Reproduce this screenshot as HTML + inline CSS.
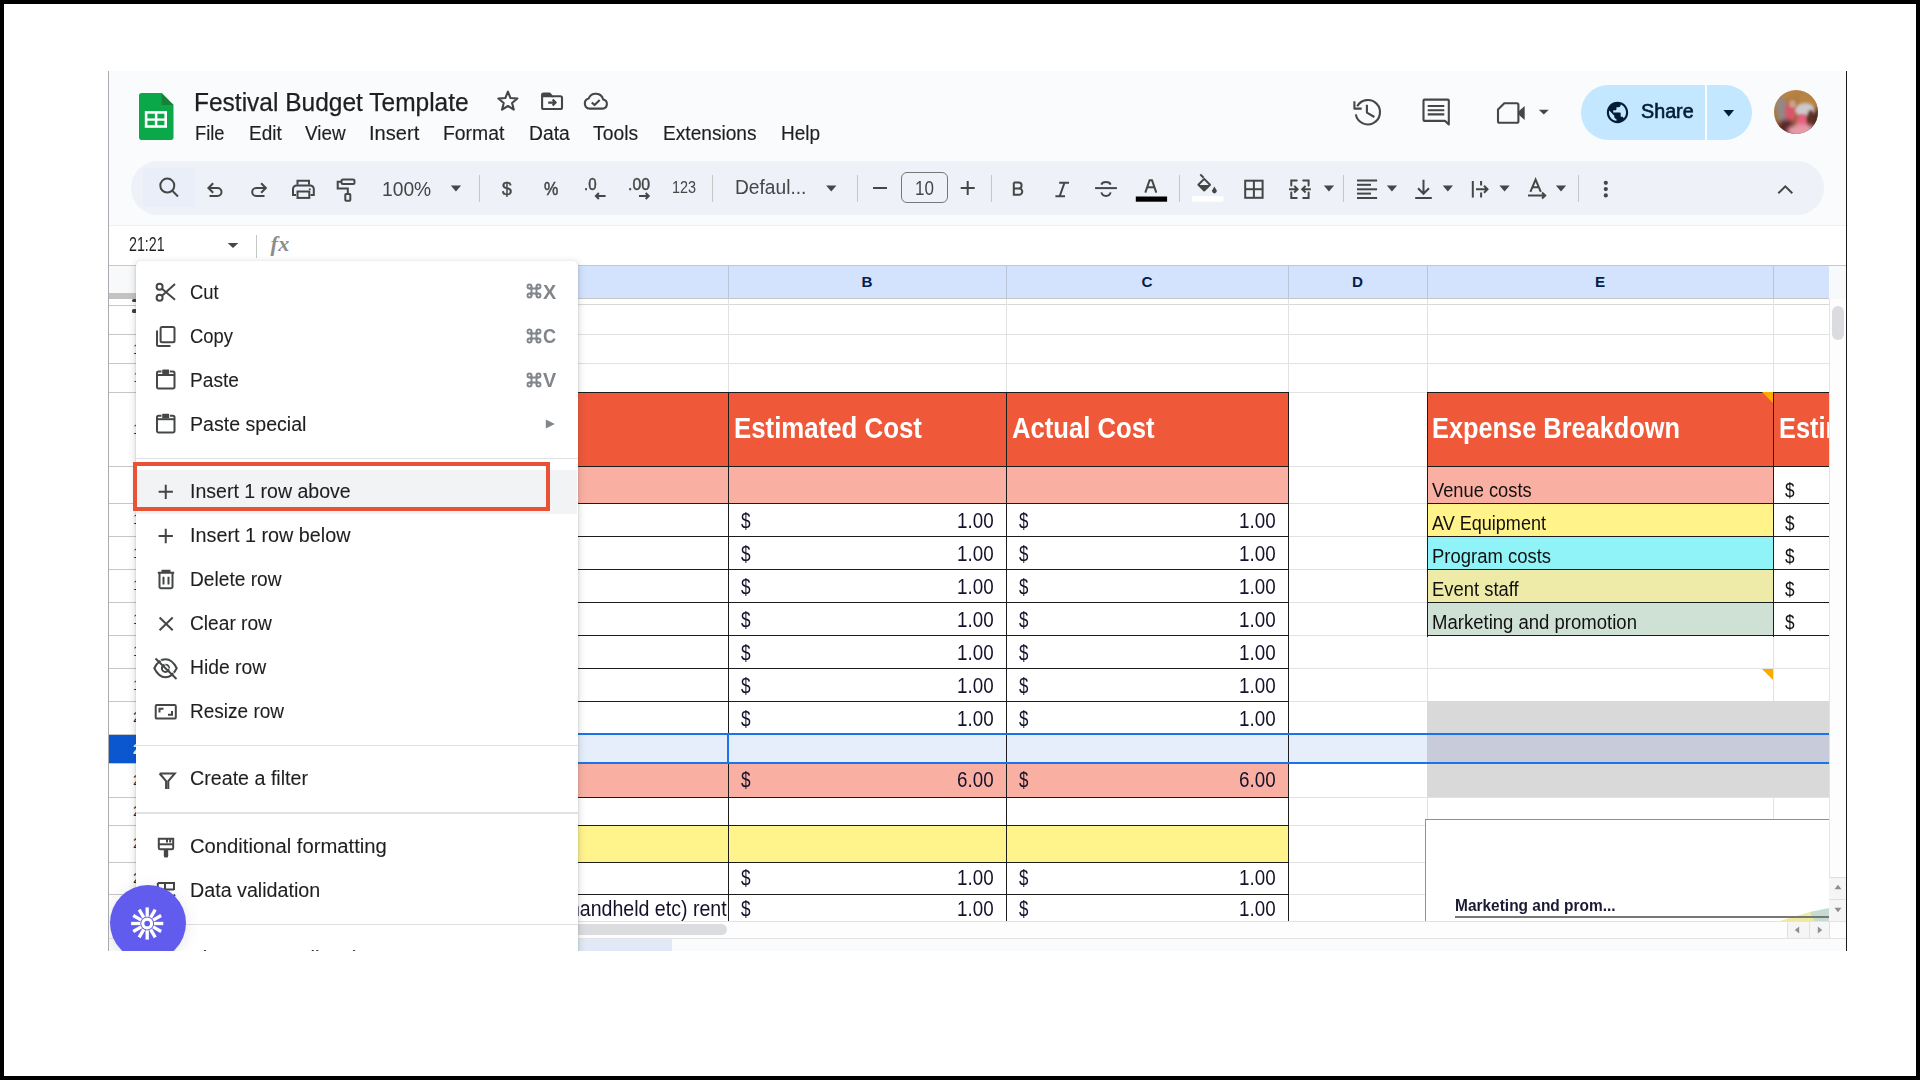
<!DOCTYPE html><html><head><meta charset="utf-8"><style>html,body{margin:0;padding:0;}body{width:1920px;height:1080px;position:relative;overflow:hidden;background:#fff;font-family:"Liberation Sans", sans-serif;}</style></head><body>
<div style="position:absolute;left:0;top:0;width:1920px;height:1080px;clip-path:inset(71px 73px 129px 108px);">
<div style="position:absolute;left:108px;top:71px;width:1739px;height:880px;background:#fff"></div>
<div style="position:absolute;left:108px;top:71px;width:1739px;height:155px;background:#f9fbfd"></div>
<svg style="position:absolute;left:139px;top:93px;" width="35" height="47" viewBox="0 0 35 47"><path d="M2.6 0h20l11.9 11.9v32.4a2.6 2.6 0 0 1-2.6 2.6H2.6A2.6 2.6 0 0 1 0 44.3V2.6A2.6 2.6 0 0 1 2.6 0z" fill="#0ba84a"/><path d="M22.6 0l11.9 11.9H22.6z" fill="#188038"/><rect x="7.1" y="19.4" width="19.6" height="14.1" fill="none" stroke="#fff" stroke-width="2.6"/><line x1="7.1" y1="26.6" x2="26.7" y2="26.6" stroke="#fff" stroke-width="2.3"/><line x1="17.1" y1="19.4" x2="17.1" y2="33.5" stroke="#fff" stroke-width="2.5"/></svg>
<div style="position:absolute;left:193.90px;top:90px;font-size:25.2px;line-height:1;font-weight:400;color:#1f1f1f;white-space:nowrap;transform:scaleX(0.9728);transform-origin:0 0;-webkit-text-stroke:0.25px #1f1f1f;">Festival Budget Template</div>
<div style="position:absolute;left:195.30px;top:124px;font-size:19.4px;line-height:1;font-weight:400;color:#1f1f1f;white-space:nowrap;transform:scaleX(0.9429);transform-origin:0 0;-webkit-text-stroke:0.15px #1f1f1f;">File</div>
<div style="position:absolute;left:248.70px;top:124px;font-size:19.4px;line-height:1;font-weight:400;color:#1f1f1f;white-space:nowrap;transform:scaleX(0.9778);transform-origin:0 0;-webkit-text-stroke:0.15px #1f1f1f;">Edit</div>
<div style="position:absolute;left:305.00px;top:124px;font-size:19.4px;line-height:1;font-weight:400;color:#1f1f1f;white-space:nowrap;transform:scaleX(0.9714);transform-origin:0 0;-webkit-text-stroke:0.15px #1f1f1f;">View</div>
<div style="position:absolute;left:369.20px;top:124px;font-size:19.4px;line-height:1;font-weight:400;color:#1f1f1f;white-space:nowrap;transform:scaleX(1.0359);transform-origin:0 0;-webkit-text-stroke:0.15px #1f1f1f;">Insert</div>
<div style="position:absolute;left:443.30px;top:124px;font-size:19.4px;line-height:1;font-weight:400;color:#1f1f1f;white-space:nowrap;transform:scaleX(0.9992);transform-origin:0 0;-webkit-text-stroke:0.15px #1f1f1f;">Format</div>
<div style="position:absolute;left:528.70px;top:124px;font-size:19.4px;line-height:1;font-weight:400;color:#1f1f1f;white-space:nowrap;transform:scaleX(0.9939);transform-origin:0 0;-webkit-text-stroke:0.15px #1f1f1f;">Data</div>
<div style="position:absolute;left:593.00px;top:124px;font-size:19.4px;line-height:1;font-weight:400;color:#1f1f1f;white-space:nowrap;transform:scaleX(0.9956);transform-origin:0 0;-webkit-text-stroke:0.15px #1f1f1f;">Tools</div>
<div style="position:absolute;left:662.50px;top:124px;font-size:19.4px;line-height:1;font-weight:400;color:#1f1f1f;white-space:nowrap;transform:scaleX(0.9864);transform-origin:0 0;-webkit-text-stroke:0.15px #1f1f1f;">Extensions</div>
<div style="position:absolute;left:780.80px;top:124px;font-size:19.4px;line-height:1;font-weight:400;color:#1f1f1f;white-space:nowrap;transform:scaleX(0.9800);transform-origin:0 0;-webkit-text-stroke:0.15px #1f1f1f;">Help</div>
<svg style="position:absolute;left:0;top:0" width="1920" height="160" viewBox="0 0 1920 160"><polygon points="507.90,91.60 510.49,98.04 517.41,98.51 512.08,102.96 513.78,109.69 507.90,106.00 502.02,109.69 503.72,102.96 498.39,98.51 505.31,98.04" fill="none" stroke="#444746" stroke-width="2.1" stroke-linejoin="round" stroke-width="2"/><path d="M542.1 95 A1.5 1.5 0 0 1 543.6 93.6 H549.5 L552 96.2 H560.4 A1.6 1.6 0 0 1 562 97.8 V107.4 A1.6 1.6 0 0 1 560.4 109 H543.7 A1.6 1.6 0 0 1 542.1 107.4 Z" fill="none" stroke="#444746" stroke-width="2.1" stroke-linejoin="round"/><path d="M542.1 94.5 H549.5 L551.6 96.6 H542.1Z" fill="#444746" stroke="#444746" stroke-width="1.5"/><path d="M548.2 102.6 H555.5 M552.6 99.6 L555.7 102.6 L552.6 105.6" fill="none" stroke="#444746" stroke-width="2.1" stroke-linejoin="round" stroke-width="1.9"/><path d="M589.5 108.6 H602.5 A4.6 4.6 0 0 0 603.2 99.5 A7.7 7.7 0 0 0 588.7 98.4 A5.2 5.2 0 0 0 589.5 108.6 Z" fill="none" stroke="#444746" stroke-width="2.1" stroke-linejoin="round"/><path d="M591.8 102.4 L594.6 105.1 L599.7 99.9" fill="none" stroke="#444746" stroke-width="2.1" stroke-linejoin="round" stroke-width="1.9"/><path d="M1357.2 106.2 A12.2 12.2 0 1 1 1355.8 114.4" fill="none" stroke="#444746" stroke-width="2.1" stroke-linejoin="round" stroke-width="2.3"/><path d="M1354.4 101.3 V108.6 H1361.7" fill="none" stroke="#444746" stroke-width="2.1" stroke-linejoin="round" stroke-width="2.2" stroke-linejoin="miter"/><path d="M1366.9 104.8 V112.6 L1374.4 117" fill="none" stroke="#444746" stroke-width="2.1" stroke-linejoin="round" stroke-width="2.3"/><path d="M1424.5 99.6 H1447.8 A1 1 0 0 1 1448.8 100.6 V124.5 L1445.2 120.9 H1424.5 A1 1 0 0 1 1423.5 119.9 V100.6 A1 1 0 0 1 1424.5 99.6 Z" fill="none" stroke="#444746" stroke-width="2.1" stroke-linejoin="round" stroke-width="2.3"/><path d="M1427.7 106 H1444.3 M1427.7 110.3 H1444.3 M1427.7 114.4 H1444.3" fill="none" stroke="#444746" stroke-width="2.1" stroke-linejoin="round" stroke-width="2.2"/><path d="M1504.3 103.2 H1516.8 A1.6 1.6 0 0 1 1518.4 104.8 V121.2 A1.6 1.6 0 0 1 1516.8 122.8 H1499.6 A1.6 1.6 0 0 1 1498 121.2 V109.4 Z" fill="none" stroke="#444746" stroke-width="2.1" stroke-linejoin="round" stroke-width="2.3"/><path d="M1518.4 111.5 L1524.7 106 V120 L1518.4 114.5Z" fill="#444746"/><path d="M1538.8 109.7 H1548.8 L1543.8 114.6Z" fill="#444746"/></svg>
<div style="position:absolute;left:1581px;top:85px;width:171px;height:55px;background:#c2e7ff;border-radius:27.5px"></div>
<div style="position:absolute;left:1705px;top:85px;width:1.6px;height:55px;background:#f9fbfd"></div>
<svg style="position:absolute;left:1606px;top:101px;" width="23" height="23" viewBox="1.2 1.2 21.6 21.6"><path fill="#001d35" d="M12 2C6.48 2 2 6.48 2 12s4.48 10 10 10 10-4.48 10-10S17.52 2 12 2zm-1 17.93c-3.95-.49-7-3.85-7-7.93 0-.62.08-1.21.21-1.79L9 15v1c0 1.1.9 2 2 2v1.93zm6.9-2.54c-.26-.81-1-1.39-1.9-1.39h-1v-3c0-.55-.45-1-1-1H8v-2h2c.55 0 1-.45 1-1V7h2c1.1 0 2-.9 2-2v-.41c2.93 1.19 5 4.06 5 7.41 0 2.08-.8 3.97-2.1 5.39z"/></svg>
<div style="position:absolute;left:1640.70px;top:101px;font-size:20px;line-height:1;font-weight:400;color:#001d35;white-space:nowrap;transform:scaleX(0.9869);transform-origin:0 0;-webkit-text-stroke:0.6px #001d35;">Share</div>
<svg style="position:absolute;left:1722px;top:109px;" width="14" height="9" viewBox="0 0 14 9"><path d="M1.4 1 H12.1 L6.75 7.6Z" fill="#001d35"/></svg>
<div style="position:absolute;left:1774px;top:90px;width:44px;height:44px;border-radius:50%;overflow:hidden;background:linear-gradient(160deg,#c08a48 0%,#a8743c 45%,#6a4028 100%);"><div style="position:absolute;left:24px;top:0px;width:22px;height:20px;border-radius:50%;background:#b88444;filter:blur(2px);transform:rotate(0deg)"></div><div style="position:absolute;left:34px;top:18px;width:12px;height:26px;border-radius:50%;background:#4e2a1e;filter:blur(2px);transform:rotate(0deg)"></div><div style="position:absolute;left:3px;top:6px;width:12px;height:34px;border-radius:50%;background:#948884;filter:blur(1.5px);transform:rotate(-10deg)"></div><div style="position:absolute;left:11px;top:12px;width:11px;height:20px;border-radius:50%;background:#d8566a;filter:blur(1.5px);transform:rotate(0deg)"></div><div style="position:absolute;left:15px;top:10px;width:7px;height:8px;border-radius:50%;background:#c8a088;filter:blur(1.2px);transform:rotate(0deg)"></div><div style="position:absolute;left:4px;top:30px;width:16px;height:16px;border-radius:50%;background:#5a2428;filter:blur(2px);transform:rotate(0deg)"></div><div style="position:absolute;left:21px;top:13px;width:20px;height:14px;border-radius:50%;background:#cdc8cc;filter:blur(1.5px);transform:rotate(0deg)"></div><div style="position:absolute;left:22px;top:24px;width:13px;height:18px;border-radius:50%;background:#e4607c;filter:blur(1.5px);transform:rotate(0deg)"></div><div style="position:absolute;left:33px;top:20px;width:8px;height:22px;border-radius:50%;background:#5c3024;filter:blur(1.5px);transform:rotate(0deg)"></div><div style="position:absolute;left:13px;top:34px;width:30px;height:14px;border-radius:50%;background:#e49aa8;filter:blur(2px);transform:rotate(0deg)"></div></div>
<div style="position:absolute;left:131px;top:161px;width:1693px;height:54px;background:#eef2f8;border-radius:27px"></div>
<div style="position:absolute;left:143px;top:168px;width:52px;height:39px;background:#e9eef8;border-radius:2px"></div>
<svg style="position:absolute;left:0;top:0" width="1920" height="260" viewBox="0 0 1920 260"><circle cx="167.3" cy="185.6" r="7" fill="none" stroke="#444746" stroke-width="2"/><line x1="172.5" y1="191" x2="178" y2="196.5" fill="none" stroke="#444746" stroke-width="2" stroke-width="2.2"/><path d="M209.5 196 H217.5 A4 4 0 0 0 217.5 188 H208.5 M213.2 183.2 L208.4 188 L213.2 192.8" fill="none" stroke="#444746" stroke-width="2"/><path d="M264.5 196 H256.2 A4 4 0 0 1 256.2 188 H265.8 M261.1 183.2 L265.9 188 L261.1 192.8" fill="none" stroke="#444746" stroke-width="2"/><path d="M297.5 184.8 V180.8 H309 V184.8" fill="none" stroke="#444746" stroke-width="2"/><path d="M296 195 H293 V189 A3.6 3.6 0 0 1 296.6 185.4 H310.2 A3.6 3.6 0 0 1 313.8 189 V195 H310.5" fill="none" stroke="#444746" stroke-width="2"/><rect x="297.5" y="191.5" width="11.8" height="6.4" fill="none" stroke="#444746" stroke-width="2"/><circle cx="309.8" cy="189.2" r="1" fill="#444746"/><rect x="341.5" y="179.5" width="13" height="4.6" rx="1.5" fill="none" stroke="#444746" stroke-width="2"/><path d="M341.5 181.8 H337.7 V188.5 H347.8 V194" fill="none" stroke="#444746" stroke-width="2"/><rect x="345.3" y="194" width="5" height="6.8" rx="0.8" fill="none" stroke="#444746" stroke-width="2"/><path d="M605.6 196 H595.8 M598.9 193 L595.9 196 L598.9 199" fill="none" stroke="#444746" stroke-width="2" stroke-width="1.7"/><path d="M639 196 H648.8 M645.7 193 L648.7 196 L645.7 199" fill="none" stroke="#444746" stroke-width="2" stroke-width="1.7"/><line x1="873" y1="188" x2="887" y2="188" fill="none" stroke="#444746" stroke-width="2" stroke-width="2.2"/><line x1="960.7" y1="188" x2="974.7" y2="188" fill="none" stroke="#444746" stroke-width="2" stroke-width="2.2"/><line x1="967.7" y1="181" x2="967.7" y2="195" fill="none" stroke="#444746" stroke-width="2" stroke-width="2.2"/><line x1="1095.1" y1="188.1" x2="1116.9" y2="188.1" fill="none" stroke="#444746" stroke-width="2" stroke-width="2.2"/><path d="M1101.4 184.6 A4.7 3.2 0 0 1 1110.6 184.6" fill="none" stroke="#444746" stroke-width="2" stroke-width="2.1"/><path d="M1101.4 192.4 A4.7 4.4 0 0 0 1110.6 192.4" fill="none" stroke="#444746" stroke-width="2" stroke-width="2.1"/><path d="M1013.8 182.4 H1018.6 A3 3 0 0 1 1018.6 188.4 H1013.8 M1013.8 188.4 H1019.1 A3.2 3.2 0 0 1 1019.1 194.8 H1013.8 Z M1013.8 182.4 V194.8" fill="none" stroke="#444746" stroke-width="2" stroke-width="3" stroke-linejoin="miter"/><path d="M1059.2 182.7 H1069 M1055.4 196.2 H1065 M1064.4 183 L1059.8 195.8" fill="none" stroke="#444746" stroke-width="2" stroke-width="2.6"/><rect x="1135.8" y="196.5" width="31.3" height="5.2" fill="#000"/><path d="M1145.3 192.7 L1149.6 180.2 H1152 L1156.3 192.7" fill="none" stroke="#444746" stroke-width="2" stroke-width="2.2" stroke-linejoin="miter"/><path d="M1147.2 187.3 H1154.4" fill="none" stroke="#444746" stroke-width="2" stroke-width="2"/><rect x="1192" y="196.2" width="31.3" height="5.5" fill="#ffffff"/><path d="M1200.3 174.4 L1203.6 177.8" fill="none" stroke="#444746" stroke-width="2" stroke-width="2"/><path d="M1204.2 178.9 L1210 184.7 L1204.2 190.5 L1198.4 184.7 Z" fill="none" stroke="#444746" stroke-width="2" stroke-width="2" stroke-linejoin="round"/><path d="M1198.4 184.9 H1210 L1204.2 190.7 Z" fill="#444746"/><path d="M1214.4 186.4 L1212.2 190.2 A2.35 2.35 0 1 0 1216.6 190.2 Z" fill="#444746"/><rect x="1245.2" y="180.7" width="17.4" height="17.1" fill="none" stroke="#444746" stroke-width="2"/><line x1="1253.9" y1="180.7" x2="1253.9" y2="197.8" fill="none" stroke="#444746" stroke-width="2"/><line x1="1245.2" y1="189.2" x2="1262.6" y2="189.2" fill="none" stroke="#444746" stroke-width="2"/><path d="M1296.7 180.6 H1291.3 V185.6 M1291.3 192.6 V198 H1296.7 M1303.2 180.6 H1308.6 V185.6 M1308.6 192.6 V198 H1303.2" fill="none" stroke="#444746" stroke-width="2" stroke-width="2.1" stroke-linecap="round"/><path d="M1289 189.2 H1297 M1294.2 185.9 L1297.6 189.2 L1294.2 192.5 M1310.8 189.2 H1302.6 M1305.6 185.9 L1302.2 189.2 L1305.6 192.5" fill="none" stroke="#444746" stroke-width="2" stroke-width="2.1"/><line x1="1357" y1="180.5" x2="1377.1" y2="180.5" fill="none" stroke="#444746" stroke-width="2" stroke-width="1.7"/><line x1="1357" y1="184.8" x2="1371" y2="184.8" fill="none" stroke="#444746" stroke-width="2" stroke-width="1.7"/><line x1="1357" y1="189.3" x2="1377.1" y2="189.3" fill="none" stroke="#444746" stroke-width="2" stroke-width="1.7"/><line x1="1357" y1="193.6" x2="1371" y2="193.6" fill="none" stroke="#444746" stroke-width="2" stroke-width="1.7"/><line x1="1357" y1="198" x2="1377.1" y2="198" fill="none" stroke="#444746" stroke-width="2" stroke-width="1.7"/><path d="M1423.5 179.7 V193.5 M1418 188.3 L1423.5 193.8 L1429 188.3" fill="none" stroke="#444746" stroke-width="2"/><line x1="1415.2" y1="198" x2="1431.8" y2="198" fill="none" stroke="#444746" stroke-width="2"/><line x1="1472.8" y1="181" x2="1472.8" y2="197.6" fill="none" stroke="#444746" stroke-width="2"/><path d="M1481.1 181 V185.6 M1481.1 192.6 V197.6" fill="none" stroke="#444746" stroke-width="2"/><path d="M1476 189.2 H1487.5 M1484 185.7 L1487.5 189.2 L1484 192.7" fill="none" stroke="#444746" stroke-width="2"/><path d="M1530.4 191.8 L1535.6 179.6 L1540.8 191.8 M1532.2 187.2 H1539" fill="none" stroke="#444746" stroke-width="2" stroke-width="2"/><path d="M1528 195.4 H1545 M1542 192.4 L1545.2 195.4 L1542 198.4" fill="none" stroke="#444746" stroke-width="2"/><circle cx="1605.8" cy="182.8" r="2.1" fill="#444746"/><circle cx="1605.8" cy="189.1" r="2.1" fill="#444746"/><circle cx="1605.8" cy="195.4" r="2.1" fill="#444746"/><path d="M1778.3 193.3 L1785.3 186.3 L1792.3 193.3" fill="none" stroke="#444746" stroke-width="2" stroke-width="2.1"/></svg>
<div style="position:absolute;left:479.3px;top:174.5px;width:1px;height:27.0px;background:#c7c7c7"></div>
<div style="position:absolute;left:711.8px;top:174.5px;width:1px;height:27.0px;background:#c7c7c7"></div>
<div style="position:absolute;left:857.3px;top:174.5px;width:1px;height:27.0px;background:#c7c7c7"></div>
<div style="position:absolute;left:990.8px;top:174.5px;width:1px;height:27.0px;background:#c7c7c7"></div>
<div style="position:absolute;left:1179.2px;top:174.5px;width:1px;height:27.0px;background:#c7c7c7"></div>
<div style="position:absolute;left:1342.8px;top:174.5px;width:1px;height:27.0px;background:#c7c7c7"></div>
<div style="position:absolute;left:1577.8px;top:174.5px;width:1px;height:27.0px;background:#c7c7c7"></div>
<svg style="position:absolute;left:449px;top:184px;" width="13" height="8" viewBox="0 0 13 8"><path d="M1.8000000000000114 1.5999999999999943 L12.100000000000023 1.5999999999999943 L6.9500000000000455 7.400000000000006Z" fill="#444746"/></svg>
<svg style="position:absolute;left:825px;top:184px;" width="13" height="8" viewBox="0 0 13 8"><path d="M1.1000000000000227 1.5999999999999943 L11.399999999999977 1.5999999999999943 L6.25 7.400000000000006Z" fill="#444746"/></svg>
<svg style="position:absolute;left:1322px;top:184px;" width="13" height="8" viewBox="0 0 13 8"><path d="M1.7999999999999545 1.5999999999999943 L12.099999999999909 1.5999999999999943 L6.949999999999818 7.400000000000006Z" fill="#444746"/></svg>
<svg style="position:absolute;left:1385px;top:184px;" width="13" height="8" viewBox="0 0 13 8"><path d="M1.7999999999999545 1.5999999999999943 L12.099999999999909 1.5999999999999943 L6.949999999999818 7.400000000000006Z" fill="#444746"/></svg>
<svg style="position:absolute;left:1441px;top:184px;" width="13" height="8" viewBox="0 0 13 8"><path d="M1.7000000000000455 1.5999999999999943 L12.0 1.5999999999999943 L6.849999999999909 7.400000000000006Z" fill="#444746"/></svg>
<svg style="position:absolute;left:1498px;top:184px;" width="13" height="8" viewBox="0 0 13 8"><path d="M1.400000000000091 1.5999999999999943 L11.700000000000045 1.5999999999999943 L6.550000000000182 7.400000000000006Z" fill="#444746"/></svg>
<svg style="position:absolute;left:1554px;top:184px;" width="13" height="8" viewBox="0 0 13 8"><path d="M1.900000000000091 1.5999999999999943 L12.200000000000045 1.5999999999999943 L7.050000000000182 7.400000000000006Z" fill="#444746"/></svg>
<div style="position:absolute;left:382.00px;top:179px;font-size:20px;line-height:1;font-weight:400;color:#444746;white-space:nowrap;transform:scaleX(0.9620);transform-origin:0 0;">100%</div>
<div style="position:absolute;left:501.80px;top:179px;font-size:19px;line-height:1;font-weight:400;color:#444746;white-space:nowrap;transform:scaleX(0.9238);transform-origin:0 0;-webkit-text-stroke:0.5px #444746;">$</div>
<div style="position:absolute;left:543.60px;top:180px;font-size:18px;line-height:1;font-weight:400;color:#444746;white-space:nowrap;transform:scaleX(0.8937);transform-origin:0 0;-webkit-text-stroke:0.5px #444746;">%</div>
<div style="position:absolute;left:583.60px;top:176px;font-size:17.4px;line-height:1;font-weight:400;color:#444746;white-space:nowrap;transform:scaleX(0.8690);transform-origin:0 0;-webkit-text-stroke:0.45px #444746;">.0</div>
<div style="position:absolute;left:627.60px;top:176px;font-size:17.4px;line-height:1;font-weight:400;color:#444746;white-space:nowrap;transform:scaleX(0.9072);transform-origin:0 0;-webkit-text-stroke:0.45px #444746;">.00</div>
<div style="position:absolute;left:671.70px;top:179px;font-size:17px;line-height:1;font-weight:400;color:#444746;white-space:nowrap;transform:scaleX(0.8496);transform-origin:0 0;">123</div>
<div style="position:absolute;left:734.70px;top:177px;font-size:20.5px;line-height:1;font-weight:400;color:#444746;white-space:nowrap;transform:scaleX(0.9351);transform-origin:0 0;">Defaul...</div>
<div style="position:absolute;left:901.4px;top:172.1px;width:46.2px;height:31.3px;box-sizing:border-box;border:1.4px solid #747775;border-radius:6px"></div>
<div style="position:absolute;left:914.90px;top:178px;font-size:20px;line-height:1;font-weight:400;color:#444746;white-space:nowrap;transform:scaleX(0.8494);transform-origin:0 0;">10</div>
<div style="position:absolute;left:108px;top:225px;width:1739px;height:1px;background:#eef0f3"></div>
<div style="position:absolute;left:128.75px;top:235px;font-size:19.3px;line-height:1;font-weight:400;color:#1f1f1f;white-space:nowrap;transform:scaleX(0.7389);transform-origin:0 0;">21:21</div>
<svg style="position:absolute;left:227px;top:242px;" width="13" height="8" viewBox="0 0 13 8"><path d="M0.7 0.9 H11.3 L6 6.1Z" fill="#444746"/></svg>
<div style="position:absolute;left:255.5px;top:235px;width:1px;height:22.5px;background:#c7c7c7"></div>
<div style="position:absolute;left:270.50px;top:233px;font-size:22px;line-height:1;font-weight:700;color:#8c8c8c;white-space:nowrap;font-family:'Liberation Serif',serif;font-style:italic;letter-spacing:0.3px;">fx</div>
<div style="position:absolute;left:108px;top:265px;width:1739px;height:1px;background:#c7c7c7"></div>
<div style="position:absolute;left:109px;top:266px;width:27px;height:33px;background:#f8f9fa"></div>
<div style="position:absolute;left:136px;top:266px;width:1693px;height:32px;background:#d3e3fd"></div>
<div style="position:absolute;left:1829px;top:266px;width:17px;height:33px;background:#f8f9fa"></div>
<div style="position:absolute;left:109px;top:298px;width:1720px;height:1px;background:#c4c7c5"></div>
<div style="position:absolute;left:109px;top:293px;width:27px;height:6px;background:#c3c3c3"></div>
<div style="position:absolute;left:728px;top:266px;width:1px;height:32px;background:#b9c4d6"></div>
<div style="position:absolute;left:1006px;top:266px;width:1px;height:32px;background:#b9c4d6"></div>
<div style="position:absolute;left:1288px;top:266px;width:1px;height:32px;background:#b9c4d6"></div>
<div style="position:absolute;left:1427px;top:266px;width:1px;height:32px;background:#b9c4d6"></div>
<div style="position:absolute;left:1773px;top:266px;width:1px;height:32px;background:#b9c4d6"></div>
<div style="position:absolute;left:232.00px;width:400px;top:274px;font-size:15.2px;line-height:1;font-weight:700;color:#041e49;white-space:nowrap;text-align:center;">A</div>
<div style="position:absolute;left:667.00px;width:400px;top:274px;font-size:15.2px;line-height:1;font-weight:700;color:#041e49;white-space:nowrap;text-align:center;">B</div>
<div style="position:absolute;left:947.00px;width:400px;top:274px;font-size:15.2px;line-height:1;font-weight:700;color:#041e49;white-space:nowrap;text-align:center;">C</div>
<div style="position:absolute;left:1157.50px;width:400px;top:274px;font-size:15.2px;line-height:1;font-weight:700;color:#041e49;white-space:nowrap;text-align:center;">D</div>
<div style="position:absolute;left:1400.00px;width:400px;top:274px;font-size:15.2px;line-height:1;font-weight:700;color:#041e49;white-space:nowrap;text-align:center;">E</div>
<div style="position:absolute;left:109px;top:299px;width:27px;height:622px;background:#ffffff"></div>
<div style="position:absolute;left:109px;top:305px;width:27px;height:1px;background:#c7c7c7"></div>
<div style="position:absolute;left:109px;top:334px;width:27px;height:1px;background:#c7c7c7"></div>
<div style="position:absolute;left:109px;top:363px;width:27px;height:1px;background:#c7c7c7"></div>
<div style="position:absolute;left:109px;top:392px;width:27px;height:1px;background:#c7c7c7"></div>
<div style="position:absolute;left:109px;top:466px;width:27px;height:1px;background:#c7c7c7"></div>
<div style="position:absolute;left:109px;top:503px;width:27px;height:1px;background:#c7c7c7"></div>
<div style="position:absolute;left:109px;top:536px;width:27px;height:1px;background:#c7c7c7"></div>
<div style="position:absolute;left:109px;top:569px;width:27px;height:1px;background:#c7c7c7"></div>
<div style="position:absolute;left:109px;top:602px;width:27px;height:1px;background:#c7c7c7"></div>
<div style="position:absolute;left:109px;top:635px;width:27px;height:1px;background:#c7c7c7"></div>
<div style="position:absolute;left:109px;top:668px;width:27px;height:1px;background:#c7c7c7"></div>
<div style="position:absolute;left:109px;top:701px;width:27px;height:1px;background:#c7c7c7"></div>
<div style="position:absolute;left:109px;top:734px;width:27px;height:1px;background:#c7c7c7"></div>
<div style="position:absolute;left:109px;top:763px;width:27px;height:1px;background:#c7c7c7"></div>
<div style="position:absolute;left:109px;top:797px;width:27px;height:1px;background:#c7c7c7"></div>
<div style="position:absolute;left:109px;top:825px;width:27px;height:1px;background:#c7c7c7"></div>
<div style="position:absolute;left:109px;top:862px;width:27px;height:1px;background:#c7c7c7"></div>
<div style="position:absolute;left:109px;top:894px;width:27px;height:1px;background:#c7c7c7"></div>
<div style="position:absolute;left:109px;top:921px;width:27px;height:1px;background:#c7c7c7"></div>
<div style="position:absolute;left:136px;top:304px;width:1693px;height:1px;background:#d8d8d8"></div>
<div style="position:absolute;left:136px;top:334px;width:1693px;height:1px;background:#e2e2e2"></div>
<div style="position:absolute;left:136px;top:363px;width:1693px;height:1px;background:#e2e2e2"></div>
<div style="position:absolute;left:136px;top:392px;width:1693px;height:1px;background:#e2e2e2"></div>
<div style="position:absolute;left:136px;top:466px;width:1693px;height:1px;background:#e2e2e2"></div>
<div style="position:absolute;left:136px;top:503px;width:1693px;height:1px;background:#e2e2e2"></div>
<div style="position:absolute;left:136px;top:536px;width:1693px;height:1px;background:#e2e2e2"></div>
<div style="position:absolute;left:136px;top:569px;width:1693px;height:1px;background:#e2e2e2"></div>
<div style="position:absolute;left:136px;top:602px;width:1693px;height:1px;background:#e2e2e2"></div>
<div style="position:absolute;left:136px;top:635px;width:1693px;height:1px;background:#e2e2e2"></div>
<div style="position:absolute;left:136px;top:668px;width:1693px;height:1px;background:#e2e2e2"></div>
<div style="position:absolute;left:136px;top:701px;width:1693px;height:1px;background:#e2e2e2"></div>
<div style="position:absolute;left:136px;top:734px;width:1693px;height:1px;background:#e2e2e2"></div>
<div style="position:absolute;left:136px;top:763px;width:1693px;height:1px;background:#e2e2e2"></div>
<div style="position:absolute;left:136px;top:797px;width:1693px;height:1px;background:#e2e2e2"></div>
<div style="position:absolute;left:136px;top:825px;width:1693px;height:1px;background:#e2e2e2"></div>
<div style="position:absolute;left:136px;top:862px;width:1693px;height:1px;background:#e2e2e2"></div>
<div style="position:absolute;left:136px;top:894px;width:1693px;height:1px;background:#e2e2e2"></div>
<div style="position:absolute;left:728px;top:299px;width:1px;height:622px;background:#e2e2e2"></div>
<div style="position:absolute;left:1006px;top:299px;width:1px;height:622px;background:#e2e2e2"></div>
<div style="position:absolute;left:1288px;top:299px;width:1px;height:622px;background:#e2e2e2"></div>
<div style="position:absolute;left:1427px;top:299px;width:1px;height:622px;background:#e2e2e2"></div>
<div style="position:absolute;left:1773px;top:299px;width:1px;height:622px;background:#e2e2e2"></div>
<div style="position:absolute;left:136px;top:392px;width:1152px;height:74px;background:#ef5839"></div>
<div style="position:absolute;left:136px;top:466px;width:1152px;height:37px;background:#f9b0a2"></div>
<div style="position:absolute;left:136px;top:763px;width:1152px;height:34px;background:#f9b0a2"></div>
<div style="position:absolute;left:136px;top:825px;width:1152px;height:37px;background:#fff48c"></div>
<div style="position:absolute;left:1427px;top:392px;width:402px;height:74px;background:#ef5839"></div>
<div style="position:absolute;left:1427px;top:466px;width:346px;height:37px;background:#f9b0a2"></div>
<div style="position:absolute;left:1427px;top:503px;width:346px;height:33px;background:#fff38a"></div>
<div style="position:absolute;left:1427px;top:536px;width:346px;height:33px;background:#8ff3f7"></div>
<div style="position:absolute;left:1427px;top:569px;width:346px;height:33px;background:#eeeba9"></div>
<div style="position:absolute;left:1427px;top:602px;width:346px;height:33px;background:#cfe0d4"></div>
<div style="position:absolute;left:1427px;top:701px;width:402px;height:96px;background:#d9d9d9"></div>
<div style="position:absolute;left:136px;top:734px;width:1693px;height:29px;background:#e7eefb"></div>
<div style="position:absolute;left:1427px;top:734px;width:402px;height:29px;background:#c8ccda"></div>
<div style="position:absolute;left:136px;top:391.5px;width:1152.7px;height:1.7px;background:#1c1c1c"></div>
<div style="position:absolute;left:136px;top:465.5px;width:1152.7px;height:1.7px;background:#1c1c1c"></div>
<div style="position:absolute;left:136px;top:502.5px;width:1152.7px;height:1.7px;background:#1c1c1c"></div>
<div style="position:absolute;left:136px;top:535.5px;width:1152.7px;height:1.7px;background:#1c1c1c"></div>
<div style="position:absolute;left:136px;top:568.5px;width:1152.7px;height:1.7px;background:#1c1c1c"></div>
<div style="position:absolute;left:136px;top:601.5px;width:1152.7px;height:1.7px;background:#1c1c1c"></div>
<div style="position:absolute;left:136px;top:634.5px;width:1152.7px;height:1.7px;background:#1c1c1c"></div>
<div style="position:absolute;left:136px;top:667.5px;width:1152.7px;height:1.7px;background:#1c1c1c"></div>
<div style="position:absolute;left:136px;top:700.5px;width:1152.7px;height:1.7px;background:#1c1c1c"></div>
<div style="position:absolute;left:136px;top:733.5px;width:1152.7px;height:1.7px;background:#1c1c1c"></div>
<div style="position:absolute;left:136px;top:796.5px;width:1152.7px;height:1.7px;background:#1c1c1c"></div>
<div style="position:absolute;left:136px;top:824.5px;width:1152.7px;height:1.7px;background:#1c1c1c"></div>
<div style="position:absolute;left:136px;top:861.5px;width:1152.7px;height:1.7px;background:#1c1c1c"></div>
<div style="position:absolute;left:136px;top:893.5px;width:1152.7px;height:1.7px;background:#1c1c1c"></div>
<div style="position:absolute;left:727.5px;top:391.5px;width:1.7px;height:530px;background:#1c1c1c"></div>
<div style="position:absolute;left:1005.5px;top:391.5px;width:1.7px;height:530px;background:#1c1c1c"></div>
<div style="position:absolute;left:1287.5px;top:391.5px;width:1.7px;height:530px;background:#1c1c1c"></div>
<div style="position:absolute;left:1427px;top:391.5px;width:402px;height:1.7px;background:#1c1c1c"></div>
<div style="position:absolute;left:1427px;top:465.5px;width:402px;height:1.7px;background:#1c1c1c"></div>
<div style="position:absolute;left:1427px;top:502.5px;width:402px;height:1.7px;background:#1c1c1c"></div>
<div style="position:absolute;left:1427px;top:535.5px;width:402px;height:1.7px;background:#1c1c1c"></div>
<div style="position:absolute;left:1427px;top:568.5px;width:402px;height:1.7px;background:#1c1c1c"></div>
<div style="position:absolute;left:1427px;top:601.5px;width:402px;height:1.7px;background:#1c1c1c"></div>
<div style="position:absolute;left:1427px;top:634.5px;width:402px;height:1.7px;background:#1c1c1c"></div>
<div style="position:absolute;left:1426.5px;top:391.5px;width:1.7px;height:245px;background:#1c1c1c"></div>
<div style="position:absolute;left:1772.5px;top:391.5px;width:1.7px;height:245px;background:#1c1c1c"></div>
<div style="position:absolute;left:136px;top:733px;width:1693px;height:2px;background:#1a73e8"></div>
<div style="position:absolute;left:136px;top:762px;width:1693px;height:2px;background:#1a73e8"></div>
<div style="position:absolute;left:136px;top:733px;width:592.5px;height:31px;box-sizing:border-box;border:2.2px solid #1a73e8"></div>
<svg style="position:absolute;left:1762px;top:392px;" width="11" height="11" viewBox="0 0 11 11"><path d="M0 0H11V11Z" fill="#f9ab00"/></svg>
<svg style="position:absolute;left:1762px;top:669px;" width="11" height="11" viewBox="0 0 11 11"><path d="M0 0H11V11Z" fill="#f9ab00"/></svg>
<div style="position:absolute;left:131.5px;top:298.8px;width:5px;height:3.4px;background:#3c3c3c;border-radius:1.5px"></div>
<div style="position:absolute;left:131.5px;top:309.3px;width:5px;height:3.4px;background:#3c3c3c;border-radius:1.5px"></div>
<div style="position:absolute;left:109px;top:735px;width:27px;height:28px;background:#0b57d0"></div>
<div style="position:absolute;left:-59.00px;width:400px;top:312px;font-size:14.5px;line-height:1;font-weight:400;color:#1f1f1f;white-space:nowrap;text-align:center;">9</div>
<div style="position:absolute;left:-59.00px;width:400px;top:342px;font-size:14.5px;line-height:1;font-weight:400;color:#1f1f1f;white-space:nowrap;text-align:center;">10</div>
<div style="position:absolute;left:-59.00px;width:400px;top:370px;font-size:14.5px;line-height:1;font-weight:400;color:#1f1f1f;white-space:nowrap;text-align:center;">11</div>
<div style="position:absolute;left:-59.00px;width:400px;top:422px;font-size:14.5px;line-height:1;font-weight:400;color:#1f1f1f;white-space:nowrap;text-align:center;">12</div>
<div style="position:absolute;left:-59.00px;width:400px;top:478px;font-size:14.5px;line-height:1;font-weight:400;color:#1f1f1f;white-space:nowrap;text-align:center;">13</div>
<div style="position:absolute;left:-59.00px;width:400px;top:512px;font-size:14.5px;line-height:1;font-weight:400;color:#1f1f1f;white-space:nowrap;text-align:center;">14</div>
<div style="position:absolute;left:-59.00px;width:400px;top:546px;font-size:14.5px;line-height:1;font-weight:400;color:#1f1f1f;white-space:nowrap;text-align:center;">15</div>
<div style="position:absolute;left:-59.00px;width:400px;top:578px;font-size:14.5px;line-height:1;font-weight:400;color:#1f1f1f;white-space:nowrap;text-align:center;">16</div>
<div style="position:absolute;left:-59.00px;width:400px;top:612px;font-size:14.5px;line-height:1;font-weight:400;color:#1f1f1f;white-space:nowrap;text-align:center;">17</div>
<div style="position:absolute;left:-59.00px;width:400px;top:644px;font-size:14.5px;line-height:1;font-weight:400;color:#1f1f1f;white-space:nowrap;text-align:center;">18</div>
<div style="position:absolute;left:-59.00px;width:400px;top:678px;font-size:14.5px;line-height:1;font-weight:400;color:#1f1f1f;white-space:nowrap;text-align:center;">19</div>
<div style="position:absolute;left:-59.00px;width:400px;top:710px;font-size:14.5px;line-height:1;font-weight:400;color:#1f1f1f;white-space:nowrap;text-align:center;">20</div>
<div style="position:absolute;left:-59.00px;width:400px;top:742px;font-size:14.5px;line-height:1;font-weight:700;color:#fff;white-space:nowrap;text-align:center;">21</div>
<div style="position:absolute;left:-59.00px;width:400px;top:773px;font-size:14.5px;line-height:1;font-weight:400;color:#1f1f1f;white-space:nowrap;text-align:center;">22</div>
<div style="position:absolute;left:-59.00px;width:400px;top:804px;font-size:14.5px;line-height:1;font-weight:400;color:#1f1f1f;white-space:nowrap;text-align:center;">23</div>
<div style="position:absolute;left:-59.00px;width:400px;top:836px;font-size:14.5px;line-height:1;font-weight:400;color:#1f1f1f;white-space:nowrap;text-align:center;">24</div>
<div style="position:absolute;left:-59.00px;width:400px;top:871px;font-size:14.5px;line-height:1;font-weight:400;color:#1f1f1f;white-space:nowrap;text-align:center;">25</div>
<div style="position:absolute;left:-59.00px;width:400px;top:900px;font-size:14.5px;line-height:1;font-weight:400;color:#1f1f1f;white-space:nowrap;text-align:center;">26</div>
<div style="position:absolute;left:733.70px;top:413px;font-size:29.5px;line-height:1;font-weight:700;color:#ffffff;white-space:nowrap;transform:scaleX(0.8750);transform-origin:0 0;">Estimated Cost</div>
<div style="position:absolute;left:1011.60px;top:413px;font-size:29.5px;line-height:1;font-weight:700;color:#ffffff;white-space:nowrap;transform:scaleX(0.8689);transform-origin:0 0;">Actual Cost</div>
<div style="position:absolute;left:1432.00px;top:413px;font-size:29.5px;line-height:1;font-weight:700;color:#ffffff;white-space:nowrap;transform:scaleX(0.8596);transform-origin:0 0;">Expense Breakdown</div>
<div style="position:absolute;left:1773px;top:392px;width:56px;height:74px;overflow:hidden">
<div style="position:absolute;left:5.80px;top:21px;font-size:29.5px;line-height:1;font-weight:700;color:#ffffff;white-space:nowrap;transform:scaleX(0.8596);transform-origin:0 0;">Estimated</div>
</div>
<div style="position:absolute;left:741.40px;top:511px;font-size:21.5px;line-height:1;font-weight:400;color:#16112b;white-space:nowrap;transform:scaleX(0.8000);transform-origin:0 0;">$</div>
<div style="position:absolute;left:956.90px;top:511px;font-size:21.5px;line-height:1;font-weight:400;color:#16112b;white-space:nowrap;transform:scaleX(0.8743);transform-origin:0 0;">1.00</div>
<div style="position:absolute;left:1019.00px;top:511px;font-size:21.5px;line-height:1;font-weight:400;color:#16112b;white-space:nowrap;transform:scaleX(0.7833);transform-origin:0 0;">$</div>
<div style="position:absolute;left:1239.20px;top:511px;font-size:21.5px;line-height:1;font-weight:400;color:#16112b;white-space:nowrap;transform:scaleX(0.8743);transform-origin:0 0;">1.00</div>
<div style="position:absolute;left:741.40px;top:544px;font-size:21.5px;line-height:1;font-weight:400;color:#16112b;white-space:nowrap;transform:scaleX(0.8000);transform-origin:0 0;">$</div>
<div style="position:absolute;left:956.90px;top:544px;font-size:21.5px;line-height:1;font-weight:400;color:#16112b;white-space:nowrap;transform:scaleX(0.8743);transform-origin:0 0;">1.00</div>
<div style="position:absolute;left:1019.00px;top:544px;font-size:21.5px;line-height:1;font-weight:400;color:#16112b;white-space:nowrap;transform:scaleX(0.7833);transform-origin:0 0;">$</div>
<div style="position:absolute;left:1239.20px;top:544px;font-size:21.5px;line-height:1;font-weight:400;color:#16112b;white-space:nowrap;transform:scaleX(0.8743);transform-origin:0 0;">1.00</div>
<div style="position:absolute;left:741.40px;top:577px;font-size:21.5px;line-height:1;font-weight:400;color:#16112b;white-space:nowrap;transform:scaleX(0.8000);transform-origin:0 0;">$</div>
<div style="position:absolute;left:956.90px;top:577px;font-size:21.5px;line-height:1;font-weight:400;color:#16112b;white-space:nowrap;transform:scaleX(0.8743);transform-origin:0 0;">1.00</div>
<div style="position:absolute;left:1019.00px;top:577px;font-size:21.5px;line-height:1;font-weight:400;color:#16112b;white-space:nowrap;transform:scaleX(0.7833);transform-origin:0 0;">$</div>
<div style="position:absolute;left:1239.20px;top:577px;font-size:21.5px;line-height:1;font-weight:400;color:#16112b;white-space:nowrap;transform:scaleX(0.8743);transform-origin:0 0;">1.00</div>
<div style="position:absolute;left:741.40px;top:610px;font-size:21.5px;line-height:1;font-weight:400;color:#16112b;white-space:nowrap;transform:scaleX(0.8000);transform-origin:0 0;">$</div>
<div style="position:absolute;left:956.90px;top:610px;font-size:21.5px;line-height:1;font-weight:400;color:#16112b;white-space:nowrap;transform:scaleX(0.8743);transform-origin:0 0;">1.00</div>
<div style="position:absolute;left:1019.00px;top:610px;font-size:21.5px;line-height:1;font-weight:400;color:#16112b;white-space:nowrap;transform:scaleX(0.7833);transform-origin:0 0;">$</div>
<div style="position:absolute;left:1239.20px;top:610px;font-size:21.5px;line-height:1;font-weight:400;color:#16112b;white-space:nowrap;transform:scaleX(0.8743);transform-origin:0 0;">1.00</div>
<div style="position:absolute;left:741.40px;top:643px;font-size:21.5px;line-height:1;font-weight:400;color:#16112b;white-space:nowrap;transform:scaleX(0.8000);transform-origin:0 0;">$</div>
<div style="position:absolute;left:956.90px;top:643px;font-size:21.5px;line-height:1;font-weight:400;color:#16112b;white-space:nowrap;transform:scaleX(0.8743);transform-origin:0 0;">1.00</div>
<div style="position:absolute;left:1019.00px;top:643px;font-size:21.5px;line-height:1;font-weight:400;color:#16112b;white-space:nowrap;transform:scaleX(0.7833);transform-origin:0 0;">$</div>
<div style="position:absolute;left:1239.20px;top:643px;font-size:21.5px;line-height:1;font-weight:400;color:#16112b;white-space:nowrap;transform:scaleX(0.8743);transform-origin:0 0;">1.00</div>
<div style="position:absolute;left:741.40px;top:676px;font-size:21.5px;line-height:1;font-weight:400;color:#16112b;white-space:nowrap;transform:scaleX(0.8000);transform-origin:0 0;">$</div>
<div style="position:absolute;left:956.90px;top:676px;font-size:21.5px;line-height:1;font-weight:400;color:#16112b;white-space:nowrap;transform:scaleX(0.8743);transform-origin:0 0;">1.00</div>
<div style="position:absolute;left:1019.00px;top:676px;font-size:21.5px;line-height:1;font-weight:400;color:#16112b;white-space:nowrap;transform:scaleX(0.7833);transform-origin:0 0;">$</div>
<div style="position:absolute;left:1239.20px;top:676px;font-size:21.5px;line-height:1;font-weight:400;color:#16112b;white-space:nowrap;transform:scaleX(0.8743);transform-origin:0 0;">1.00</div>
<div style="position:absolute;left:741.40px;top:709px;font-size:21.5px;line-height:1;font-weight:400;color:#16112b;white-space:nowrap;transform:scaleX(0.8000);transform-origin:0 0;">$</div>
<div style="position:absolute;left:956.90px;top:709px;font-size:21.5px;line-height:1;font-weight:400;color:#16112b;white-space:nowrap;transform:scaleX(0.8743);transform-origin:0 0;">1.00</div>
<div style="position:absolute;left:1019.00px;top:709px;font-size:21.5px;line-height:1;font-weight:400;color:#16112b;white-space:nowrap;transform:scaleX(0.7833);transform-origin:0 0;">$</div>
<div style="position:absolute;left:1239.20px;top:709px;font-size:21.5px;line-height:1;font-weight:400;color:#16112b;white-space:nowrap;transform:scaleX(0.8743);transform-origin:0 0;">1.00</div>
<div style="position:absolute;left:741.40px;top:770px;font-size:21.5px;line-height:1;font-weight:400;color:#16112b;white-space:nowrap;transform:scaleX(0.8000);transform-origin:0 0;">$</div>
<div style="position:absolute;left:956.90px;top:770px;font-size:21.5px;line-height:1;font-weight:400;color:#16112b;white-space:nowrap;transform:scaleX(0.8743);transform-origin:0 0;">6.00</div>
<div style="position:absolute;left:1019.00px;top:770px;font-size:21.5px;line-height:1;font-weight:400;color:#16112b;white-space:nowrap;transform:scaleX(0.7833);transform-origin:0 0;">$</div>
<div style="position:absolute;left:1239.20px;top:770px;font-size:21.5px;line-height:1;font-weight:400;color:#16112b;white-space:nowrap;transform:scaleX(0.8743);transform-origin:0 0;">6.00</div>
<div style="position:absolute;left:741.40px;top:868px;font-size:21.5px;line-height:1;font-weight:400;color:#16112b;white-space:nowrap;transform:scaleX(0.8000);transform-origin:0 0;">$</div>
<div style="position:absolute;left:956.90px;top:868px;font-size:21.5px;line-height:1;font-weight:400;color:#16112b;white-space:nowrap;transform:scaleX(0.8743);transform-origin:0 0;">1.00</div>
<div style="position:absolute;left:1019.00px;top:868px;font-size:21.5px;line-height:1;font-weight:400;color:#16112b;white-space:nowrap;transform:scaleX(0.7833);transform-origin:0 0;">$</div>
<div style="position:absolute;left:1239.20px;top:868px;font-size:21.5px;line-height:1;font-weight:400;color:#16112b;white-space:nowrap;transform:scaleX(0.8743);transform-origin:0 0;">1.00</div>
<div style="position:absolute;left:741.40px;top:899px;font-size:21.5px;line-height:1;font-weight:400;color:#16112b;white-space:nowrap;transform:scaleX(0.8000);transform-origin:0 0;">$</div>
<div style="position:absolute;left:956.90px;top:899px;font-size:21.5px;line-height:1;font-weight:400;color:#16112b;white-space:nowrap;transform:scaleX(0.8743);transform-origin:0 0;">1.00</div>
<div style="position:absolute;left:1019.00px;top:899px;font-size:21.5px;line-height:1;font-weight:400;color:#16112b;white-space:nowrap;transform:scaleX(0.7833);transform-origin:0 0;">$</div>
<div style="position:absolute;left:1239.20px;top:899px;font-size:21.5px;line-height:1;font-weight:400;color:#16112b;white-space:nowrap;transform:scaleX(0.8743);transform-origin:0 0;">1.00</div>
<div style="position:absolute;left:136px;top:894px;width:591px;height:27px;overflow:hidden">
<div style="position:absolute;right:0.3px;top:5.00px;font-size:21.5px;line-height:1;color:#16112b;white-space:nowrap;transform:scaleX(0.91);transform-origin:100% 0">Audio-visual (microphones, handheld etc) rent</div>
</div>
<div style="position:absolute;left:1432.00px;top:481px;font-size:19.3px;line-height:1;font-weight:400;color:#111111;white-space:nowrap;transform:scaleX(0.9486);transform-origin:0 0;">Venue costs</div>
<div style="position:absolute;left:1784.80px;top:481px;font-size:19.3px;line-height:1;font-weight:400;color:#111111;white-space:nowrap;transform:scaleX(0.8930);transform-origin:0 0;">$</div>
<div style="position:absolute;left:1432.00px;top:514px;font-size:19.3px;line-height:1;font-weight:400;color:#111111;white-space:nowrap;transform:scaleX(0.9355);transform-origin:0 0;">AV Equipment</div>
<div style="position:absolute;left:1784.80px;top:514px;font-size:19.3px;line-height:1;font-weight:400;color:#111111;white-space:nowrap;transform:scaleX(0.8930);transform-origin:0 0;">$</div>
<div style="position:absolute;left:1432.00px;top:547px;font-size:19.3px;line-height:1;font-weight:400;color:#111111;white-space:nowrap;transform:scaleX(0.9573);transform-origin:0 0;">Program costs</div>
<div style="position:absolute;left:1784.80px;top:547px;font-size:19.3px;line-height:1;font-weight:400;color:#111111;white-space:nowrap;transform:scaleX(0.8930);transform-origin:0 0;">$</div>
<div style="position:absolute;left:1432.00px;top:580px;font-size:19.3px;line-height:1;font-weight:400;color:#111111;white-space:nowrap;transform:scaleX(0.9554);transform-origin:0 0;">Event staff</div>
<div style="position:absolute;left:1784.80px;top:580px;font-size:19.3px;line-height:1;font-weight:400;color:#111111;white-space:nowrap;transform:scaleX(0.8930);transform-origin:0 0;">$</div>
<div style="position:absolute;left:1432.00px;top:613px;font-size:19.3px;line-height:1;font-weight:400;color:#111111;white-space:nowrap;transform:scaleX(0.9610);transform-origin:0 0;">Marketing and promotion</div>
<div style="position:absolute;left:1784.80px;top:613px;font-size:19.3px;line-height:1;font-weight:400;color:#111111;white-space:nowrap;transform:scaleX(0.8930);transform-origin:0 0;">$</div>
<div style="position:absolute;left:1425px;top:819px;width:404px;height:102px;background:#fff"></div>
<div style="position:absolute;left:1425px;top:819px;width:404px;height:1px;background:#8f8f8f"></div>
<div style="position:absolute;left:1425px;top:819px;width:1px;height:102px;background:#8f8f8f"></div>
<div style="position:absolute;left:1773px;top:797px;width:1px;height:22px;background:#e2e2e2"></div>
<div style="position:absolute;left:1455.30px;top:898px;font-size:16.6px;line-height:1;font-weight:700;color:#1b1a33;white-space:nowrap;transform:scaleX(0.9318);transform-origin:0 0;">Marketing and prom...</div>
<svg style="position:absolute;left:1780px;top:904px;" width="49" height="17" viewBox="0 0 49 17"><path d="M0 17 L30 8 L49 6 V17Z" fill="#efeaa0"/><path d="M30 8 L49 4 V17 H34Z" fill="#c5ddd0"/></svg>
<div style="position:absolute;left:1455px;top:916px;width:374px;height:1.6px;background:#777"></div>
<div style="position:absolute;left:1829px;top:299px;width:17px;height:622px;background:#fdfdfd"></div>
<div style="position:absolute;left:1829px;top:299px;width:1px;height:622px;background:#e3e3e3"></div>
<div style="position:absolute;left:1832px;top:305.5px;width:12px;height:34px;background:#dadce0;border-radius:6px"></div>
<div style="position:absolute;left:1829px;top:877px;width:17px;height:44px;background:#f5f5f5"></div>
<div style="position:absolute;left:1829px;top:877px;width:17px;height:1px;background:#e0e0e0"></div>
<div style="position:absolute;left:1829px;top:899px;width:17px;height:1px;background:#e0e0e0"></div>
<svg style="position:absolute;left:1834px;top:884px;" width="8" height="6" viewBox="0 0 8 6"><path d="M0.5 5.2 H7.5 L4 0.8Z" fill="#8e8e8e"/></svg>
<svg style="position:absolute;left:1834px;top:907px;" width="8" height="6" viewBox="0 0 8 6"><path d="M0.5 0.8 H7.5 L4 5.2Z" fill="#8e8e8e"/></svg>
<div style="position:absolute;left:108px;top:921px;width:1739px;height:18px;background:#fdfdfd"></div>
<div style="position:absolute;left:108px;top:921px;width:1739px;height:1px;background:#e3e3e3"></div>
<div style="position:absolute;left:560px;top:924px;width:167px;height:11px;background:#dadce0;border-radius:6px"></div>
<div style="position:absolute;left:1787px;top:922px;width:42px;height:16px;background:#f5f5f5"></div>
<div style="position:absolute;left:1787px;top:922px;width:1px;height:16px;background:#e0e0e0"></div>
<div style="position:absolute;left:1809px;top:922px;width:1px;height:16px;background:#e0e0e0"></div>
<div style="position:absolute;left:1829px;top:922px;width:1px;height:16px;background:#e0e0e0"></div>
<svg style="position:absolute;left:1794px;top:926px;" width="6" height="8" viewBox="0 0 6 8"><path d="M5.2 0.5 V7.5 L0.8 4Z" fill="#8e8e8e"/></svg>
<svg style="position:absolute;left:1817px;top:926px;" width="6" height="8" viewBox="0 0 6 8"><path d="M0.8 0.5 V7.5 L5.2 4Z" fill="#8e8e8e"/></svg>
<div style="position:absolute;left:108px;top:938px;width:1739px;height:1px;background:#e3e3e3"></div>
<div style="position:absolute;left:108px;top:939px;width:1739px;height:12px;background:#f9fbfd"></div>
<div style="position:absolute;left:560px;top:939px;width:112px;height:12px;background:#e1e9f7"></div>
<div style="position:absolute;left:136px;top:261px;width:442px;height:720px;background:#fff;border-radius:5px;box-shadow:0 2px 6px 2px rgba(60,64,67,.15),0 1px 2px rgba(60,64,67,.3);"></div>
<div style="position:absolute;left:136px;top:469.6px;width:441px;height:44.4px;background:#f1f3f4"></div>
<div style="position:absolute;left:136px;top:457.5px;width:442px;height:1.3px;background:#dfe1e5"></div>
<div style="position:absolute;left:136px;top:745.0px;width:442px;height:1.3px;background:#dfe1e5"></div>
<div style="position:absolute;left:136px;top:812.3px;width:442px;height:1.3px;background:#dfe1e5"></div>
<div style="position:absolute;left:136px;top:923.7px;width:442px;height:1.3px;background:#dfe1e5"></div>
<div style="position:absolute;left:189.80px;top:282px;font-size:20px;line-height:1;font-weight:400;color:#1f1f1f;white-space:nowrap;transform:scaleX(0.9184);transform-origin:0 0;-webkit-text-stroke:0.1px #1f1f1f;">Cut</div>
<div style="position:absolute;left:542.60px;top:282px;font-size:20px;line-height:1;font-weight:700;color:#80868b;white-space:nowrap;transform:scaleX(0.9887);transform-origin:0 0;">X</div>
<svg style="position:absolute;left:525.2px;top:282.4px" width="18" height="18" viewBox="525.2 282.4 18 18"><path d="M529.7 288.9 H538.7 M529.7 293.9 H538.7 M531.7 286.9 V295.9 M536.7 286.9 V295.9" fill="none" stroke="#80868b" stroke-width="1.9"/><circle cx="529.70" cy="286.90" r="2.0" fill="none" stroke="#80868b" stroke-width="1.9"/><circle cx="529.70" cy="295.90" r="2.0" fill="none" stroke="#80868b" stroke-width="1.9"/><circle cx="538.70" cy="286.90" r="2.0" fill="none" stroke="#80868b" stroke-width="1.9"/><circle cx="538.70" cy="295.90" r="2.0" fill="none" stroke="#80868b" stroke-width="1.9"/></svg>
<div style="position:absolute;left:189.80px;top:326px;font-size:20px;line-height:1;font-weight:400;color:#1f1f1f;white-space:nowrap;transform:scaleX(0.9198);transform-origin:0 0;-webkit-text-stroke:0.1px #1f1f1f;">Copy</div>
<div style="position:absolute;left:542.60px;top:326px;font-size:20px;line-height:1;font-weight:700;color:#80868b;white-space:nowrap;transform:scaleX(0.9034);transform-origin:0 0;">C</div>
<svg style="position:absolute;left:525.2px;top:326.5px" width="18" height="18" viewBox="525.2 326.5 18 18"><path d="M529.7 333.0 H538.7 M529.7 338.0 H538.7 M531.7 331.0 V340.0 M536.7 331.0 V340.0" fill="none" stroke="#80868b" stroke-width="1.9"/><circle cx="529.70" cy="331.00" r="2.0" fill="none" stroke="#80868b" stroke-width="1.9"/><circle cx="529.70" cy="340.00" r="2.0" fill="none" stroke="#80868b" stroke-width="1.9"/><circle cx="538.70" cy="331.00" r="2.0" fill="none" stroke="#80868b" stroke-width="1.9"/><circle cx="538.70" cy="340.00" r="2.0" fill="none" stroke="#80868b" stroke-width="1.9"/></svg>
<div style="position:absolute;left:189.80px;top:370px;font-size:20px;line-height:1;font-weight:400;color:#1f1f1f;white-space:nowrap;transform:scaleX(0.9561);transform-origin:0 0;-webkit-text-stroke:0.1px #1f1f1f;">Paste</div>
<div style="position:absolute;left:542.60px;top:370px;font-size:20px;line-height:1;font-weight:700;color:#80868b;white-space:nowrap;transform:scaleX(0.9887);transform-origin:0 0;">V</div>
<svg style="position:absolute;left:525.2px;top:370.59999999999997px" width="18" height="18" viewBox="525.2 370.59999999999997 18 18"><path d="M529.7 377.09999999999997 H538.7 M529.7 382.09999999999997 H538.7 M531.7 375.09999999999997 V384.09999999999997 M536.7 375.09999999999997 V384.09999999999997" fill="none" stroke="#80868b" stroke-width="1.9"/><circle cx="529.70" cy="375.10" r="2.0" fill="none" stroke="#80868b" stroke-width="1.9"/><circle cx="529.70" cy="384.10" r="2.0" fill="none" stroke="#80868b" stroke-width="1.9"/><circle cx="538.70" cy="375.10" r="2.0" fill="none" stroke="#80868b" stroke-width="1.9"/><circle cx="538.70" cy="384.10" r="2.0" fill="none" stroke="#80868b" stroke-width="1.9"/></svg>
<div style="position:absolute;left:189.80px;top:414px;font-size:20px;line-height:1;font-weight:400;color:#1f1f1f;white-space:nowrap;transform:scaleX(0.9786);transform-origin:0 0;-webkit-text-stroke:0.1px #1f1f1f;">Paste special</div>
<div style="position:absolute;left:189.80px;top:481px;font-size:20px;line-height:1;font-weight:400;color:#1f1f1f;white-space:nowrap;transform:scaleX(0.9769);transform-origin:0 0;-webkit-text-stroke:0.1px #1f1f1f;">Insert 1 row above</div>
<div style="position:absolute;left:189.80px;top:525px;font-size:20px;line-height:1;font-weight:400;color:#1f1f1f;white-space:nowrap;transform:scaleX(0.9889);transform-origin:0 0;-webkit-text-stroke:0.1px #1f1f1f;">Insert 1 row below</div>
<div style="position:absolute;left:189.80px;top:569px;font-size:20px;line-height:1;font-weight:400;color:#1f1f1f;white-space:nowrap;transform:scaleX(0.9577);transform-origin:0 0;-webkit-text-stroke:0.1px #1f1f1f;">Delete row</div>
<div style="position:absolute;left:189.80px;top:613px;font-size:20px;line-height:1;font-weight:400;color:#1f1f1f;white-space:nowrap;transform:scaleX(0.9574);transform-origin:0 0;-webkit-text-stroke:0.1px #1f1f1f;">Clear row</div>
<div style="position:absolute;left:189.80px;top:657px;font-size:20px;line-height:1;font-weight:400;color:#1f1f1f;white-space:nowrap;transform:scaleX(0.9658);transform-origin:0 0;-webkit-text-stroke:0.1px #1f1f1f;">Hide row</div>
<div style="position:absolute;left:189.80px;top:701px;font-size:20px;line-height:1;font-weight:400;color:#1f1f1f;white-space:nowrap;transform:scaleX(0.9505);transform-origin:0 0;-webkit-text-stroke:0.1px #1f1f1f;">Resize row</div>
<div style="position:absolute;left:189.80px;top:768px;font-size:20px;line-height:1;font-weight:400;color:#1f1f1f;white-space:nowrap;transform:scaleX(0.9833);transform-origin:0 0;-webkit-text-stroke:0.1px #1f1f1f;">Create a filter</div>
<div style="position:absolute;left:189.80px;top:836px;font-size:20px;line-height:1;font-weight:400;color:#1f1f1f;white-space:nowrap;transform:scaleX(1.0113);transform-origin:0 0;-webkit-text-stroke:0.1px #1f1f1f;">Conditional formatting</div>
<div style="position:absolute;left:189.80px;top:880px;font-size:20px;line-height:1;font-weight:400;color:#1f1f1f;white-space:nowrap;transform:scaleX(0.9845);transform-origin:0 0;-webkit-text-stroke:0.1px #1f1f1f;">Data validation</div>
<div style="position:absolute;left:189.80px;top:948px;font-size:20px;line-height:1;font-weight:400;color:#1f1f1f;white-space:nowrap;">View more cell actions</div>
<svg style="position:absolute;left:545px;top:419px;" width="11" height="11" viewBox="0 0 11 11"><path d="M0.8 0.5 L9.8 5 L0.8 9.5Z" fill="#80868b"/></svg>
<div style="position:absolute;left:132.8px;top:461.8px;width:417.7px;height:49.5px;box-sizing:border-box;border:4px solid #ea5237"></div>
<svg style="position:absolute;left:0;top:0" width="600" height="1000" viewBox="0 0 600 1000"><circle cx="159.6" cy="286.8" r="3" fill="none" stroke="#444746" stroke-width="2"/><circle cx="159.6" cy="297.8" r="3" fill="none" stroke="#444746" stroke-width="2"/><path d="M162 288.8 L175 299.8 M162 295.8 L175 284" fill="none" stroke="#444746" stroke-width="2" stroke-width="2.1"/><path d="M160.6 329.5 V328.5 A1.5 1.5 0 0 1 162.1 327 H173 A1.5 1.5 0 0 1 174.5 328.5 V340.8 A1.5 1.5 0 0 1 173 342.3 H162.1 A1.5 1.5 0 0 1 160.6 340.8 Z" fill="none" stroke="#444746" stroke-width="2"/><path d="M157 330.5 V344.5 A1.5 1.5 0 0 0 158.5 346 H170.5" fill="none" stroke="#444746" stroke-width="2"/><path d="M161.5 371.59999999999997 H158.5 A1.5 1.5 0 0 0 157 373.09999999999997 V386.9 A1.5 1.5 0 0 0 158.5 388.4 H173 A1.5 1.5 0 0 0 174.5 386.9 V373.09999999999997 A1.5 1.5 0 0 0 173 371.59999999999997 H170" fill="none" stroke="#444746" stroke-width="2"/><rect x="162.2" y="369.59999999999997" width="7" height="4.4" rx="0.8" fill="#444746"/><line x1="157" y1="375.0" x2="174.5" y2="375.0" fill="none" stroke="#444746" stroke-width="2"/><path d="M161.5 415.8 H158.5 A1.5 1.5 0 0 0 157 417.3 V431.1 A1.5 1.5 0 0 0 158.5 432.6 H173 A1.5 1.5 0 0 0 174.5 431.1 V417.3 A1.5 1.5 0 0 0 173 415.8 H170" fill="none" stroke="#444746" stroke-width="2"/><rect x="162.2" y="413.8" width="7" height="4.4" rx="0.8" fill="#444746"/><line x1="157" y1="419.20000000000005" x2="174.5" y2="419.20000000000005" fill="none" stroke="#444746" stroke-width="2"/><path d="M158.6 491.8 H172.9 M165.75 484.65000000000003 V498.95" fill="none" stroke="#444746" stroke-width="2"/><path d="M158.6 536 H172.9 M165.75 528.85 V543.15" fill="none" stroke="#444746" stroke-width="2"/><path d="M157.8 572.8 H174.2 M162.5 572.8 V570.8 H169.5 V572.8" fill="none" stroke="#444746" stroke-width="2"/><path d="M159.5 573 V586.8 A1.5 1.5 0 0 0 161 588.3 H171 A1.5 1.5 0 0 0 172.5 586.8 V573" fill="none" stroke="#444746" stroke-width="2"/><path d="M163.5 576.8 V584.5 M168.5 576.8 V584.5" fill="none" stroke="#444746" stroke-width="2" stroke-width="1.9"/><path d="M159.6 617.5 L172.7 630.2 M172.7 617.5 L159.6 630.2" fill="none" stroke="#444746" stroke-width="2" stroke-width="2.1"/><path d="M154.3 668.3 C157.8 661.3 162 659.3 165.5 659.3 C169 659.3 173.2 661.3 176.7 668.3 C173.2 675.3 169 677.3 165.5 677.3 C162 677.3 157.8 675.3 154.3 668.3 Z" fill="none" stroke="#444746" stroke-width="2"/><circle cx="165.5" cy="668.3" r="3.6" fill="none" stroke="#444746" stroke-width="2"/><path d="M155.5 658.5 L176.5 679" fill="none" stroke="#444746" stroke-width="2" stroke-width="2.1"/><path d="M155.5 658.5 L176.5 679" stroke="#fff" stroke-width="1" transform="translate(1.6,-1.6)"/><rect x="155.7" y="705" width="20.1" height="13.6" rx="1.2" fill="none" stroke="#444746" stroke-width="2"/><path d="M159.5 712.5 V708.8 H163.5 M172 711 V714.8 H168" fill="none" stroke="#444746" stroke-width="2" stroke-width="1.8"/><path d="M159.6 773.5 H174.8 L168.3 781.2 V789 M159.6 773.5 L166.1 781.2 V789" fill="none" stroke="#444746" stroke-width="2" stroke-width="2.1"/><path d="M158.8 838.7 H173.2 V848 A1.3 1.3 0 0 1 171.9 849.3 H160.1 A1.3 1.3 0 0 1 158.8 848 Z" fill="none" stroke="#444746" stroke-width="2"/><line x1="158.8" y1="844.3" x2="173.2" y2="844.3" fill="none" stroke="#444746" stroke-width="2"/><path d="M167 839 V842.5 M170.2 839 V842.5" fill="none" stroke="#444746" stroke-width="2" stroke-width="1.6"/><rect x="163.8" y="849.3" width="4.4" height="8.2" rx="1.6" fill="#444746"/><path d="M157.8 883 H174 V890 M157.8 883 V900 H166 M157.8 889.5 H174 M165 883 V896" fill="none" stroke="#444746" stroke-width="2"/><path d="M167.5 897.5 L170 900 L175 894.5" fill="none" stroke="#444746" stroke-width="2"/></svg>
<div style="position:absolute;left:110px;top:885px;width:76px;height:76px;border-radius:50%;background:#625cee;box-shadow:0 2px 16px rgba(0,0,0,.10)"></div>
<svg style="position:absolute;left:0;top:0" width="200" height="1000" viewBox="0 0 200 1000"><line x1="154.00" y1="923.50" x2="163.30" y2="923.50" stroke="#fff" stroke-width="3.3" stroke-linecap="butt"/><line x1="153.09" y1="926.90" x2="161.14" y2="931.55" stroke="#fff" stroke-width="3.3" stroke-linecap="butt"/><line x1="150.60" y1="929.39" x2="155.25" y2="937.44" stroke="#fff" stroke-width="3.3" stroke-linecap="butt"/><line x1="147.20" y1="930.30" x2="147.20" y2="939.60" stroke="#fff" stroke-width="3.3" stroke-linecap="butt"/><line x1="143.80" y1="929.39" x2="139.15" y2="937.44" stroke="#fff" stroke-width="3.3" stroke-linecap="butt"/><line x1="141.31" y1="926.90" x2="133.26" y2="931.55" stroke="#fff" stroke-width="3.3" stroke-linecap="butt"/><line x1="140.40" y1="923.50" x2="131.10" y2="923.50" stroke="#fff" stroke-width="3.3" stroke-linecap="butt"/><line x1="141.31" y1="920.10" x2="133.26" y2="915.45" stroke="#fff" stroke-width="3.3" stroke-linecap="butt"/><line x1="143.80" y1="917.61" x2="139.15" y2="909.56" stroke="#fff" stroke-width="3.3" stroke-linecap="butt"/><line x1="147.20" y1="916.70" x2="147.20" y2="907.40" stroke="#fff" stroke-width="3.3" stroke-linecap="butt"/><line x1="150.60" y1="917.61" x2="155.25" y2="909.56" stroke="#fff" stroke-width="3.3" stroke-linecap="butt"/><line x1="153.09" y1="920.10" x2="161.14" y2="915.45" stroke="#fff" stroke-width="3.3" stroke-linecap="butt"/><circle cx="147.2" cy="923.5" r="4.4" fill="none" stroke="#fff" stroke-width="3.1"/></svg>
<div style="position:absolute;left:108px;top:71px;width:1px;height:880px;background:#a8abb0"></div>
<div style="position:absolute;left:1845.5px;top:71px;width:1.5px;height:880px;background:#1a1a1a"></div>
</div>
<div style="position:absolute;left:0;top:0;width:1920px;height:1080px;box-sizing:border-box;border:4px solid #000;"></div>
</body></html>
